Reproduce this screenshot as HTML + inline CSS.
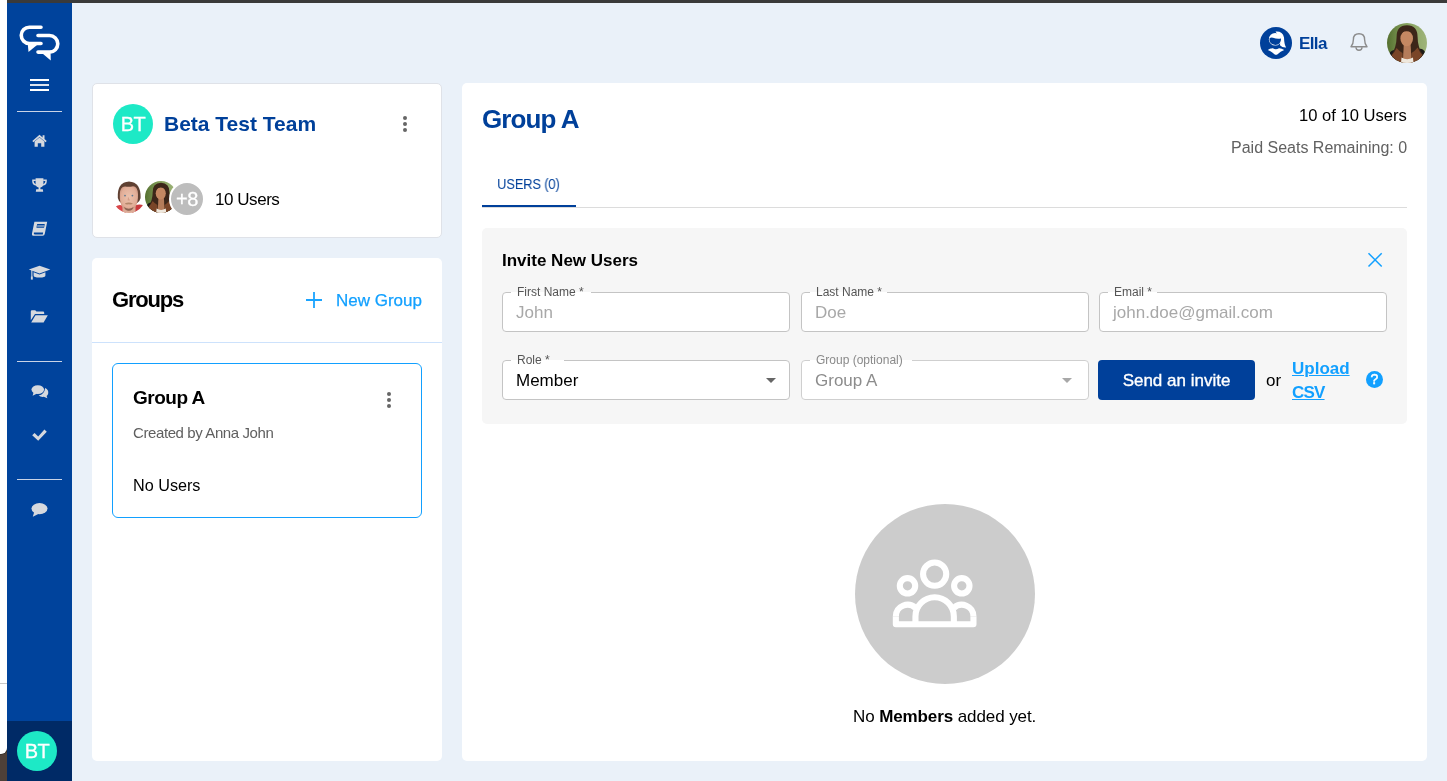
<!DOCTYPE html>
<html><head><meta charset="utf-8">
<style>
*{box-sizing:border-box;margin:0;padding:0}
html,body{width:1447px;height:781px;overflow:hidden;background:#eaf1f9;font-family:"Liberation Sans",sans-serif;position:relative}
.t,.val,.lbl,.abs{will-change:transform}
.abs{position:absolute}
.t{position:absolute;white-space:nowrap;line-height:1}
.sline{position:absolute;left:17px;width:45px;height:1px;background:#c9d3e6}
.card{position:absolute;background:#fff;border-radius:5px}
.fld{position:absolute;height:40px;border:1px solid #c4c4c4;border-radius:4px;background:#fff}
.lbl{position:absolute;top:-8px;left:8px;padding:0 5px 0 6px;font-size:12px;line-height:14px;color:#555;background:linear-gradient(#f6f6f6 0,#f6f6f6 50%,#fff 50%,#fff 100%);white-space:nowrap}
.val{position:absolute;left:13px;top:11px;font-size:17px;line-height:17px;white-space:nowrap}
.ph{color:#a8a8a8}
.caret{position:absolute;top:17px;width:0;height:0;border-left:5px solid transparent;border-right:5px solid transparent;border-top:5px solid #666}
.dot{position:absolute;width:4px;height:4px;border-radius:50%;background:#666}
svg{position:absolute;overflow:visible}
</style></head>
<body>
<!-- desktop edge -->
<div class="abs" style="left:0;top:745px;width:7px;height:36px;background:#4e4038"></div>
<div class="abs" style="left:-10px;top:0;width:17px;height:754px;background:#fff;border-radius:0 0 6px 0;box-shadow:0.5px 0.5px 0 #2a2420"></div>
<div class="abs" style="left:0;top:683px;width:7px;height:1px;background:#c8c8c8"></div>
<div class="abs" style="left:7px;top:0;width:1440px;height:3px;background:#3a3a3a"></div>

<!-- sidebar -->
<div class="abs" style="left:7px;top:3px;width:65px;height:778px;background:#00439c"></div>
<div class="abs" style="left:7px;top:721px;width:65px;height:60px;background:#002a66"></div>
<div class="sline" style="top:111px"></div>
<div class="sline" style="top:361px"></div>
<div class="sline" style="top:479px"></div>

<!-- logo -->
<svg style="left:0;top:0" width="72" height="70" viewBox="0 0 72 70">
  <g fill="none" stroke="#fff" stroke-width="3.6" stroke-linecap="round">
    <path d="M41 27.2 H29.4 A8.15 8.15 0 0 0 29.4 43.5 H41"/>
    <path d="M38 35.5 H49.5 A8.3 8.3 0 0 1 49.5 52.1 H38"/>
  </g>
  <g fill="#fff">
    <polygon points="27.8,44.3 28.5,52 37,45"/>
    <polygon points="42.5,53.5 50.8,60.5 50.6,53.5"/>
  </g>
</svg>
<!-- hamburger -->
<div class="abs" style="left:30px;top:79px;width:19px;height:2px;background:#fff"></div>
<div class="abs" style="left:30px;top:84px;width:19px;height:2px;background:#dfe5ef"></div>
<div class="abs" style="left:30px;top:89px;width:19px;height:2px;background:#fff"></div>

<!-- sidebar icons -->
<svg style="left:0;top:0" width="72" height="530" viewBox="0 0 72 530">
 <g fill="#d6d9de">
  <!-- home -->
  <path d="M39.5 134.8 L32.3 141 L33.4 142.2 L39.5 137 L45.6 142.2 L46.7 141 L44.5 139.1 V135.2 H42.6 V137.5 Z"/>
  <path d="M34.6 141.6 L39.5 137.5 L44.4 141.6 V146.8 H41.2 V143.3 H37.8 V146.8 H34.6 Z"/>
  <!-- trophy -->
  <path d="M35.6 178.2 H43.4 V183.5 Q43.4 187 40.4 187.6 V189.3 H42.8 L43.2 191.8 H35.8 L36.2 189.3 H38.6 V187.6 Q35.6 187 35.6 183.5 Z"/>
  <path d="M35.8 179.6 H32.2 V181.5 Q32.4 185.2 36.4 185.8 L36.2 184.5 Q33.8 184 33.6 181 H35.8 Z"/>
  <path d="M43.2 179.6 H46.8 V181.5 Q46.6 185.2 42.6 185.8 L42.8 184.5 Q45.2 184 45.4 181 H43.2 Z"/>
  <!-- book -->
  <path d="M34.4 221.8 H47.2 L44.8 233.8 Q44.5 235.8 42.6 235.8 H33.8 Q31.6 235.8 32 233.4 Z M33.9 232.6 Q33.4 234.5 34.8 234.5 H42.8 L43.1 232.6 Z" fill-rule="evenodd"/>
  <rect x="36.2" y="224" width="7.6" height="3.8" fill="#00439c" transform="skewX(-11) translate(44.5 0)"/>
  <rect x="36.6" y="225.5" width="6.8" height="0.9" fill="#d6d9de" transform="skewX(-11) translate(44.5 0)"/>
  <!-- grad cap -->
  <path d="M39.5 265.8 L50.3 269.6 L39.5 273.6 L28.8 269.6 Z"/>
  <path d="M33.6 272.2 L39.5 274.6 L45.4 272.2 V275.4 Q45.4 277.4 39.5 277.4 Q33.6 277.4 33.6 275.4 Z"/>
  <rect x="31.3" y="270" width="1.1" height="7"/>
  <rect x="30.9" y="276.6" width="1.9" height="3"/>
  <!-- folder -->
  <path d="M30.8 311.5 Q30.8 310.2 32 310.2 H35.2 L36.5 311.6 H43 Q44.2 311.6 44.2 312.8 V314 H35 L30.8 320.2 Z"/>
  <path d="M35.5 315.2 H47.8 L43.6 322.4 H31.2 Z"/>
 </g>
 <g fill="#d6d9de">
  <!-- comments -->
  <g transform="translate(0.6 0.8)">
  <ellipse cx="37.2" cy="388.8" rx="6.3" ry="4.4"/>
  <path d="M33 391.5 L32 395 L36.5 392.8 Z"/>
  <path d="M44.6 387.2 Q48.2 389 47.6 392.6 Q47.2 394.4 46 395.2 L46.8 397.4 L43.2 396 Q40.2 396.4 38 394.8 Q43.8 393.6 44.6 387.2 Z"/>
  </g>
  <!-- check -->
  <path d="M32.2 435.3 L34.6 432.9 L38.2 436.5 L44.4 429.4 L46.8 431.7 L38.2 440.8 Z"/>
  <!-- comment -->
  <ellipse cx="39.5" cy="508.6" rx="8" ry="5.6"/>
  <path d="M34.4 511.6 L32.8 516.8 L38.8 513.8 Z"/>
 </g>
</svg>

<!-- BT bottom avatar -->
<div class="abs" style="left:17px;top:731px;width:40px;height:40px;border-radius:50%;background:#1de9c6;color:#fff;font-size:20px;line-height:41px;text-align:center;letter-spacing:-0.5px;-webkit-text-stroke:0.3px #fff">BT</div>

<!-- header -->
<svg style="left:1260px;top:27px" width="32" height="32" viewBox="0 0 32 32">
  <circle cx="16" cy="16" r="16" fill="#00409a"/>
  <path d="M15.5 4.6 Q22.6 4 24 10.4 Q24.2 17.6 26.2 20.4 Q22 20.6 20 18.2 L20.4 12 Z" fill="#fff"/>
  <circle cx="15.2" cy="12.2" r="6.3" fill="#fff"/>
  <path d="M9.4 11.4 Q11 10 13 10.8 Q17 12.4 21 11.6 Q21.2 17.6 15.4 17.9 Q9.4 17.8 9.4 11.4 Z" fill="#00409a"/>
  <path d="M7.8 22.9 Q10.5 21.2 12.9 21.3 Q15.7 23.2 19 21.3 Q21.6 21.2 24.2 22.9 Q20.4 24.4 17.6 27.2 Q16 28.4 14.4 27.2 Q11.6 24.4 7.8 22.9 Z" fill="#fff"/>
</svg>
<div class="t" style="left:1298.5px;top:35px;font-size:17px;font-weight:bold;color:#00409a;letter-spacing:-0.6px">Ella</div>
<svg style="left:0;top:0" width="1447" height="70" viewBox="0 0 1447 70">
  <path d="M1351 46.8 Q1353.4 44 1353.4 39.5 Q1353.4 33.8 1359 33.8 Q1364.6 33.8 1364.6 39.5 Q1364.6 44 1367 46.8 Z" fill="none" stroke="#8c8c8c" stroke-width="1.4" stroke-linejoin="round"/>
  <path d="M1356 47.2 A3 3 0 0 0 1362 47.2" fill="none" stroke="#8c8c8c" stroke-width="1.4"/>
</svg>
<!-- big avatar -->
<svg style="left:1387px;top:23px" width="40" height="40" viewBox="0 0 40 40">
  <defs>
    <clipPath id="c1"><circle cx="20" cy="20" r="20"/></clipPath>
    <linearGradient id="g1" x1="0" x2="1" y1="0" y2="0"><stop offset="0" stop-color="#557030"/><stop offset="0.45" stop-color="#85a05c"/><stop offset="1" stop-color="#9fb47a"/></linearGradient>
  </defs>
  <g clip-path="url(#c1)">
    <rect width="40" height="40" fill="url(#g1)"/>
    <path d="M0 40 L2 31 Q4 27 8 27 L10 40 Z M40 40 L38.5 30 Q36 25 32 26 L30 40 Z" fill="#1c1a18"/>
    <path d="M20 2.2 Q9.4 2.5 9.6 14 Q9.6 24 4 33 Q7 38 12 40 H28 Q33 38 36 32 Q30.6 24 30.6 14 Q30.6 2.5 20 2.2 Z" fill="#3c2619"/>
    <path d="M4.5 32.5 Q8 37.5 12 40 H16 L15.5 30 Q12 28 9.6 25 Q7.5 29.5 4.5 32.5 Z M35.5 32 Q32 37.5 28 40 H24 L24.5 30 Q28 28 30.6 24.5 Q32.5 29 35.5 32 Z" fill="#7a4528"/>
    <path d="M16.8 21 H23.6 L24.6 40 H15.8 Z" fill="#b57c5a"/>
    <path d="M14.5 34.5 Q20 38 26 34.5 L26.5 40 H14 Z" fill="#efe8dd"/>
    <ellipse cx="19.7" cy="15.4" rx="6.3" ry="7.8" fill="#c48862"/>
    <path d="M13.4 11.5 Q14 5.5 20 5.4 Q26 5.6 26.4 12 Q24 8 19.5 8.2 Q15 8.5 13.4 11.5 Z" fill="#3c2619"/>
  </g>
</svg>

<!-- cards -->
<div class="card" style="left:92px;top:83px;width:350px;height:155px;border:1px solid #dfe2e8"></div>
<div class="card" style="left:92px;top:258px;width:350px;height:503px"></div>
<div class="card" style="left:462px;top:83px;width:965px;height:678px"></div>

<!-- team card -->
<div class="abs" style="left:113px;top:104px;width:40px;height:40px;border-radius:50%;background:#1de9c6;color:#fff;font-size:20px;line-height:41px;text-align:center;letter-spacing:-0.5px;-webkit-text-stroke:0.3px #fff">BT</div>
<div class="t" style="left:164px;top:113px;font-size:21px;font-weight:bold;color:#00409a">Beta Test Team</div>
<div class="dot" style="left:403px;top:116px"></div>
<div class="dot" style="left:403px;top:122px"></div>
<div class="dot" style="left:403px;top:128px"></div>

<!-- avatars -->
<svg style="left:113px;top:181px" width="32" height="32" viewBox="0 0 32 32">
  <defs><clipPath id="c2"><circle cx="16" cy="16" r="16"/></clipPath>
  <radialGradient id="fg" cx="0.5" cy="0.45" r="0.6"><stop offset="0" stop-color="#ecc2ad"/><stop offset="0.7" stop-color="#e2ae98"/><stop offset="1" stop-color="#c88f7a"/></radialGradient></defs>
  <g clip-path="url(#c2)">
    <rect width="32" height="32" fill="#fff"/>
    <path d="M4.8 17 Q3.8 1.2 16 0.4 Q28.2 1.2 27.6 17 Q26 24 16 24 Q6.4 24 4.8 17 Z" fill="#5f4032"/>
    <path d="M2.5 25.5 Q6 23 9.5 24.5 L13 32 H1 Z" fill="#d9464a"/>
    <path d="M30 24 Q26 22.6 22 24.5 L19 32 H31 Z" fill="#c93a3e"/>
    <rect x="9.5" y="23" width="13" height="9" fill="#dcab96"/>
    <path d="M6.8 13 Q7 5.6 12 5.4 Q16 6.2 20 5.2 Q24.6 5.2 25 13 Q25.4 22 22 26.5 Q19 29.6 16 29.6 Q12.6 29.6 9.6 26.5 Q6.4 22 6.8 13 Z" fill="url(#fg)"/>
    <circle cx="12" cy="14.6" r="0.9" fill="#5d7790"/><circle cx="19.4" cy="14.6" r="0.9" fill="#5d7790"/>
    <path d="M15 15.5 L14.6 19.6 H17 Z" fill="#d49e88"/>
    <path d="M11.8 22.4 Q15.8 20.6 19.8 22.4 Q19 24 15.8 23.2 Q12.6 24 11.8 22.4 Z" fill="#b4866a"/>
    <path d="M11 26 Q15.8 29.6 20.6 26 Q19.6 29.4 15.8 29.8 Q12 29.4 11 26 Z" fill="#8a6454"/>
  </g>
</svg>
<svg style="left:145px;top:181px" width="32" height="32" viewBox="0 0 40 40">
  <g clip-path="url(#c1)">
    <rect width="40" height="40" fill="url(#g1)"/>
    <path d="M0 40 L2 31 Q4 27 8 27 L10 40 Z M40 40 L38.5 30 Q36 25 32 26 L30 40 Z" fill="#1c1a18"/>
    <path d="M20 2.2 Q9.4 2.5 9.6 14 Q9.6 24 4 33 Q7 38 12 40 H28 Q33 38 36 32 Q30.6 24 30.6 14 Q30.6 2.5 20 2.2 Z" fill="#3c2619"/>
    <path d="M4.5 32.5 Q8 37.5 12 40 H16 L15.5 30 Q12 28 9.6 25 Q7.5 29.5 4.5 32.5 Z M35.5 32 Q32 37.5 28 40 H24 L24.5 30 Q28 28 30.6 24.5 Q32.5 29 35.5 32 Z" fill="#7a4528"/>
    <path d="M16.8 21 H23.6 L24.6 40 H15.8 Z" fill="#b57c5a"/>
    <path d="M14.5 34.5 Q20 38 26 34.5 L26.5 40 H14 Z" fill="#efe8dd"/>
    <ellipse cx="19.7" cy="15.4" rx="6.3" ry="7.8" fill="#c48862"/>
    <path d="M13.4 11.5 Q14 5.5 20 5.4 Q26 5.6 26.4 12 Q24 8 19.5 8.2 Q15 8.5 13.4 11.5 Z" fill="#3c2619"/>
  </g>
</svg>
<div class="abs" style="left:169px;top:181px;width:36px;height:36px;border-radius:50%;background:#bdbdbd;border:2px solid #fff;color:#fff;font-size:20px;line-height:32px;text-align:center;letter-spacing:-0.5px;-webkit-text-stroke:0.3px #fff">+8</div>
<div class="t" style="left:215px;top:191px;font-size:17px;color:#000;letter-spacing:-0.45px">10 Users</div>

<!-- groups -->
<div class="t" style="left:112px;top:289px;font-size:22px;font-weight:bold;color:#000;letter-spacing:-1.2px">Groups</div>
<svg style="left:0;top:0" width="440" height="320" viewBox="0 0 440 320">
  <path d="M306 300 H322 M314 292 V308" stroke="#1aa4ff" stroke-width="1.8" fill="none"/>
</svg>
<div class="t" style="left:336px;top:292px;font-size:17px;color:#12a0ff;-webkit-text-stroke:0.25px #12a0ff">New Group</div>
<div class="abs" style="left:92px;top:342px;width:350px;height:1px;background:#cde2fc"></div>
<div class="abs" style="left:112px;top:363px;width:310px;height:155px;border:1px solid #12a0ff;border-radius:6px"></div>
<div class="t" style="left:133px;top:388px;font-size:19px;font-weight:bold;color:#000;letter-spacing:-0.5px">Group A</div>
<div class="dot" style="left:387px;top:392px"></div>
<div class="dot" style="left:387px;top:398px"></div>
<div class="dot" style="left:387px;top:404px"></div>
<div class="t" style="left:133px;top:425px;font-size:15px;color:#5f5f5f;letter-spacing:-0.4px">Created by Anna John</div>
<div class="t" style="left:133px;top:477px;font-size:16.2px;color:#000">No Users</div>

<!-- main -->
<div class="t" style="left:482px;top:106px;font-size:26px;font-weight:bold;color:#00409a;letter-spacing:-0.9px">Group A</div>
<div class="t" style="right:40px;top:108px;font-size:16.6px;color:#000">10 of 10 Users</div>
<div class="t" style="right:40px;top:140px;font-size:16px;color:#616161">Paid Seats Remaining: 0</div>
<div class="t" style="left:497px;top:177px;font-size:14.6px;color:#00409a;letter-spacing:-0.3px;transform:scaleX(0.9);transform-origin:0 0">USERS (0)</div>
<div class="abs" style="left:482px;top:207px;width:925px;height:1px;background:#dcdcdc"></div>
<div class="abs" style="left:482px;top:205px;width:94px;height:2px;background:#00409a"></div>

<!-- invite box -->
<div class="abs" style="left:482px;top:228px;width:925px;height:196px;background:#f6f6f6;border-radius:5px"></div>
<div class="t" style="left:502px;top:252px;font-size:17px;font-weight:bold;color:#000">Invite New Users</div>
<svg style="left:0;top:0" width="1447" height="300" viewBox="0 0 1447 300">
  <path d="M1368.5 253.3 L1381.7 266.5 M1381.7 253.3 L1368.5 266.5" stroke="#12a0ff" stroke-width="1.5" fill="none"/>
</svg>

<div class="fld" style="left:502px;top:292px;width:288px"><div class="lbl" style="padding-right:7px">First Name *</div><div class="val ph">John</div></div>
<div class="fld" style="left:801px;top:292px;width:288px"><div class="lbl">Last Name *</div><div class="val ph">Doe</div></div>
<div class="fld" style="left:1099px;top:292px;width:288px"><div class="lbl">Email *</div><div class="val ph">john.doe@gmail.com</div></div>
<div class="fld" style="left:502px;top:360px;width:288px"><div class="lbl" style="padding-right:14px">Role *</div><div class="val" style="color:#000">Member</div><div class="caret" style="left:263px"></div></div>
<div class="fld" style="left:801px;top:360px;width:288px;border-color:#cfcfcf"><div class="lbl" style="color:#8a8a8a;padding-right:9px">Group (optional)</div><div class="val" style="color:#8c8c8c">Group A</div><div class="caret" style="left:260px;border-top-color:#a8a8a8"></div></div>
<div class="abs" style="left:1098px;top:360px;width:157px;height:40px;background:#00409a;border-radius:4px;color:#fff;font-size:17px;line-height:42px;text-align:center;-webkit-text-stroke:0.35px #fff">Send an invite</div>
<div class="t" style="left:1266px;top:372px;font-size:17px;color:#000">or</div>
<div class="t" style="left:1292px;top:357px;font-size:17px;line-height:24px;font-weight:bold;color:#12a0ff;text-decoration:underline">Upload<br><span style="letter-spacing:-0.8px">CSV</span></div>
<div class="abs" style="left:1366px;top:371px;width:17px;height:17px;border-radius:50%;background:#12a0ff;color:#fff;font-size:14px;line-height:17.5px;text-align:center;-webkit-text-stroke:0.5px #fff">?</div>

<!-- empty state -->
<div class="abs" style="left:855px;top:504px;width:180px;height:180px;border-radius:50%;background:#cccccc"></div>
<svg style="left:0;top:0" width="1447" height="700" viewBox="0 0 1447 700">
  <g fill="none" stroke="#fff" stroke-width="6.1">
    <circle cx="934.65" cy="574.1" r="11.6"/>
    <circle cx="907.5" cy="585.8" r="7.7"/>
    <circle cx="961.8" cy="585.8" r="7.7"/>
    <path d="M915.45 624.2 V616.4 A19.2 19.2 0 0 1 953.85 616.4 V624.2"/>
    <path d="M895.85 616.5 A11.65 11.65 0 0 1 915.5 608"/>
    <path d="M973.45 616.5 A11.65 11.65 0 0 0 953.8 608"/>
    <path d="M895.85 616.5 V624.2 H973.45 V616.5" stroke-linejoin="round"/>
  </g>
</svg>
<div class="t" style="left:853px;top:708px;font-size:17px;color:#000;letter-spacing:-0.1px">No <b>Members</b> added yet.</div>

</body></html>
